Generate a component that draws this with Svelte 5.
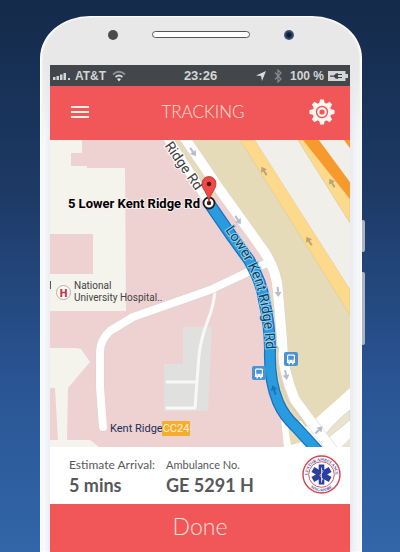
<script>
  const carrier = 'AT&T';
  const stops = [
    { x: 202, y: 226 },
    { x: 234, y: 212 },
  ];
  const laneArrows = [
    { x: 143, y: 12, turn: 56, tone: 'cool' },
    { x: 188, y: 80, turn: 56, tone: 'cool' },
    { x: 228, y: 152, turn: 85, tone: 'cool' },
    { x: 236, y: 235, turn: 80, tone: 'cool' },
    { x: 269, y: 290, turn: -45, tone: 'cool' },
    { x: 224, y: 250, turn: -110, tone: 'route' },
    { x: 214, y: 31, turn: -122, tone: 'warm' },
    { x: 282, y: 43, turn: -122, tone: 'warm' },
    { x: 259, y: 101, turn: -122, tone: 'warm' },
  ];
</script>

<main class="page">
  <div class="phone">
    <span class="key power"></span>
    <span class="key volume"></span>
    <div class="earpiece">
      <span class="sensor"></span>
      <span class="speaker"></span>
      <span class="sensor camera"></span>
    </div>

    <div class="screen">
      <div class="status">
        <div class="side">
          <svg width="18" height="8" viewBox="0 0 18 8" fill="#d3d5d7" aria-hidden="true">
            <path d="M0 5h2.500v3H0zM3.500 4H6v4H3.500zM7 2.500h2.500V8H7zM10.500 1H13v7h-2.500zM15 6h2v2h-2z" />
          </svg>
          <span class="carrier">{carrier}</span>
          <svg width="14" height="12" viewBox="0 0 14 12" fill="none" aria-hidden="true">
            <path d="M1 4.500Q7-1 13 4.500" stroke="#8f9396" stroke-width="1.700" />
            <path d="M3.500 7Q7 4 10.500 7" stroke="#d3d5d7" stroke-width="1.700" />
            <path d="M5 9Q7 7.300 9 9L7 11.500z" fill="#e5e6e7" />
          </svg>
        </div>
        <span>23:26</span>
        <div class="side end">
          <svg width="10" height="10" viewBox="0 0 10 10" fill="#d8dadb" aria-hidden="true">
            <path d="M10 0L6 10L5 5L0 4.500z" />
          </svg>
          <svg class="bt" width="8" height="14" viewBox="0 0 8 14" fill="none" stroke="#85898d" stroke-width="1.300" aria-hidden="true">
            <path d="M1 3.500L7 10L4 13V1L7 4L1 10.500" />
          </svg>
          <span>100 %</span>
          <svg width="20" height="10" viewBox="0 0 20 10" aria-hidden="true">
            <path d="M0 0h17.500v3H20v4h-2.500v3H0z" fill="#d3d5d7" />
            <path d="M2 4.500h4Q7 2 10 2v1h4v1h-4v2h4v1h-4v1Q7 8 6 5.800H2z" fill="#3d4246" />
          </svg>
        </div>
      </div>

      <header>
        <button class="icon" aria-label="Menu">
          <svg width="18" height="12" viewBox="0 0 18 12" fill="#fdeeea" aria-hidden="true">
            <path d="M0 0h18v2H0zM0 5h18v2H0zM0 10h18v2H0z" />
          </svg>
        </button>
        <h1>TRACKING</h1>
        <button class="icon right" aria-label="Settings">
          <svg width="26" height="26" viewBox="-13 -13 26 26" fill="none" stroke="#fff6f0" aria-hidden="true">
            {#each [0, 45, 90, 135, 180, 225, 270, 315] as turn}
              <path d="M-3-8L-1.900-12.500H1.900L3-8z" fill="#fff6f0" stroke="none" transform="rotate({turn})" />
            {/each}
            <circle r="7.800" stroke-width="3.200" />
            <circle r="3.700" stroke-width="2.200" />
          </svg>
        </button>
      </header>

      <svg class="map" viewBox="0 0 300 307" role="img" aria-label="Route map to 5 Lower Kent Ridge Rd">
        <defs>
          <path id="route-label" d="M175 90L187 107Q206 137 209 158Q215 180 216 215" />
          <path id="road-label" d="M113 4L155 64" />
        </defs>
        <rect width="300" height="307" fill="#e6dbb9" />
        <path d="M0 0H122L160 57L171 55L216 118L222 150L221 233L229 265L234 307H0z" fill="#eed2d2" />
        <path fill="#f4f3ec" d="M0 0H32V13H21V26H37V28H75L76 171H0V134H43V94H0z" />
        <path fill="#f4f3ec" d="M0 208H26L31 209L40 222L18 248L17 300H40L49 307H0V300H8L5 248H0z" />
        <path d="M133 187H162L158 271H114V224H133z" fill="#e0e0df" />

        <path d="M190 0H205L300 149V175z" fill="#fcd98b" stroke="#d8c9a0" stroke-width=".6" />
        <path d="M205 0H248L300 83V149z" fill="#f1efea" />
        <path d="M248 0H254L300 60V83z" fill="#fcd98b" stroke="#d8c9a0" stroke-width=".6" />
        <path d="M253 0H269L300 42V59z" fill="#f8992c" />
        <path d="M269 0H294L300 8V42z" fill="#f1efea" />
        <path d="M294 0H300V8z" fill="#f8992c" />

        <path d="M229 260L238 280L262 282L300 248V307H234z" fill="#fff" />
        <path d="M238 287L252 302L241 305z" fill="#e6dbb9" />
        <path d="M275 295Q284 283 300 270V280L279 297z" fill="#e9e3cf" stroke="#cfc7b0" stroke-width=".6" />
        <path d="M291 307L300 298V307z" fill="#e9e3cf" />

        <g fill="none" stroke-linecap="round" stroke-linejoin="round">
          <path d="M165 150Q164 165 158 180Q151 198 149 215L145 268H117M117 242H147" stroke="#f8f8f8" stroke-width="3" />
          <g stroke="#ddcfca">
            <path d="M217 123L160 150L83 177L60 191Q50 200 50 212V247L53 287" stroke-width="9" />
            <path d="M132-6L170 50L193 82L213 110Q227 130 228 152L232 200Q232 230 245 260L265 287L285 313" stroke-width="11" />
            <path d="M115-6L162 67L200 120" stroke-width="10" />
          </g>
          <g stroke="#fff">
            <path d="M217 123L160 150L83 177L60 191Q50 200 50 212V247L53 287" stroke-width="8" />
            <path d="M132-6L170 50L193 82L213 110Q227 130 228 152L232 200Q232 230 245 260L265 287L285 313" stroke-width="10" />
            <path d="M115-6L162 67" stroke-width="9" />
          </g>
          <path d="M228 208Q225 233 237 260L256 286" stroke="#dfd0b0" stroke-width="2" />
          <path d="M161 66L183 98L199 120Q212 143 214 160Q220 185 220 210Q219 240 228 262Q234 276 246 287L268 311" stroke="#1c6fc0" stroke-width="12" />
          <path d="M161 66L183 98L199 120Q212 143 214 160Q220 185 220 210Q219 240 228 262Q234 276 246 287L268 311" stroke="#299ce0" stroke-width="9.500" />
        </g>

        {#each laneArrows as a}
          <path class={a.tone} d="M-5-1H0V-3.500L5 0L0 3.500V1H-5z" transform="translate({a.x} {a.y}) rotate({a.turn})" />
        {/each}

        {#each stops as s}
          <g transform="translate({s.x} {s.y})" fill="#fff">
            <rect width="14" height="14" rx="2" fill="#4b93d6" />
            <path d="M4 2.500h6l1 1V11H9.500v1.500H8V11H6v1.500H4.500V11H3V3.500z" />
            <path d="M4.500 4h5v3.500h-5zM4.500 9H6M8 9h1.500" fill="#4b93d6" stroke="#4b93d6" stroke-width=".6" />
          </g>
        {/each}

        <text class="street"><textPath href="#road-label" startOffset="2">Ridge Rd</textPath></text>
        <text class="street on-route"><textPath href="#route-label">Lower Kent Ridge Rd</textPath></text>

        <circle cx="159" cy="63" r="5.500" fill="#fff" stroke="#1c1c1c" stroke-width="1.800" />
        <circle cx="159" cy="63" r="2.200" fill="#222" />
        <path d="M159 62C158 53 152 50 152 43.500A7 7 0 0 1 166 43.500C166 50 160 53 159 62z" fill="#ec4b48" stroke="#b22f2d" stroke-width=".8" />
        <circle cx="159" cy="44" r="2.300" fill="#5c1211" />
        <text class="place" x="150" y="68" text-anchor="end">5 Lower Kent Ridge Rd</text>

        <path d="M0 141H1V149H0z" fill="#555" />
        <circle cx="13.500" cy="152.500" r="7" fill="#fff" stroke="#c5a9a7" />
        <text class="hospital" x="13.500" y="156.500" text-anchor="middle">H</text>
        <text class="poi" x="24" y="149">National</text>
        <text class="poi" x="24" y="161">University Hospital..</text>

        <text class="station" x="60" y="292">Kent Ridge</text>
        <rect x="112" y="281" width="28" height="15" rx="1" fill="#f6ac2f" />
        <text class="code" x="126" y="292" text-anchor="middle">CC24</text>
      </svg>

      <section class="info">
        <div class="fact">
          <span class="label">Estimate Arrival:</span>
          <strong>5 mins</strong>
        </div>
        <div class="fact">
          <span class="label small">Ambulance No.</span>
          <strong>GE 5291 H</strong>
        </div>
        <svg class="badge" width="39" height="39" viewBox="-19.500 -19.500 39 39" role="img" aria-label="Lentor Ambulance Singapore">
          <defs>
            <path id="ring-top" d="M-13.500 4A14 14 0 1 1 13.500 4" />
            <path id="ring-bottom" d="M-16 5A16.700 16.700 0 0 0 16 5" />
          </defs>
          <circle r="18.500" fill="#fff" stroke="#d8434c" stroke-width="1.400" />
          <circle r="12.800" fill="#fff" stroke="#dc5a62" stroke-width="1" />
          <text><textPath href="#ring-top" startOffset="50%" text-anchor="middle">LENTOR AMBULANCE</textPath></text>
          <text><textPath href="#ring-bottom" startOffset="50%" text-anchor="middle">SINGAPORE</textPath></text>
          <g fill="#2b3f9e">
            <rect x="-2.800" y="-10" width="5.600" height="20" />
            <rect x="-2.800" y="-10" width="5.600" height="20" transform="rotate(60)" />
            <rect x="-2.800" y="-10" width="5.600" height="20" transform="rotate(120)" />
          </g>
          <path d="M0-7V8M0-5Q3-3 0-1T0 3T0 6" fill="none" stroke="#e9d9d0" stroke-width=".9" />
        </svg>
      </section>

      <button class="done">Done</button>
    </div>
  </div>
</main>

<style>
  :global(body) {
    margin: 0;
  }
  .page {
    box-sizing: border-box;
    min-height: 100vh;
    display: flex;
    padding: 16px 38px 0 40px;
    background: linear-gradient(#142a4a, #1d3a66 35%, #2a5594 70%, #3266a8);
    font-family: Lato, 'Open Sans', sans-serif;
  }
  .phone {
    position: relative;
    flex: 1;
    display: flex;
    flex-direction: column;
    padding: 0 12px 0 10px;
    border-radius: 50px 50px 0 0 / 42px 42px 0 0;
    background: linear-gradient(#e8e8e8 50px, transparent 130px),
      linear-gradient(90deg, #c9ccd2, #fafbfd 3px, #eceff4 9px, #e8ebf0 calc(100% - 12px), #f8f9fb calc(100% - 3px), #cdd0d6);
    box-shadow: inset 0 1px 2px #fff, inset 2px 0 2px #fff, inset -2px 0 2px #fff;
  }
  .key {
    position: absolute;
    left: 100%;
    width: 3px;
    background: #aab4c4;
    border-radius: 0 2px 2px 0;
  }
  .power {
    top: 204px;
    height: 32px;
  }
  .volume {
    top: 256px;
    height: 73px;
  }
  .earpiece {
    display: flex;
    justify-content: center;
    align-items: center;
    gap: 34px;
    height: 37px;
    padding: 0 0 12px 2px;
  }
  .sensor {
    width: 10px;
    height: 10px;
    border-radius: 50%;
    background: #4b4b4b;
  }
  .camera {
    background: radial-gradient(#0d1c3c 25%, #33466b 50%, #5d636c 75%);
  }
  .speaker {
    box-sizing: border-box;
    width: 98px;
    height: 7px;
    border: 1px solid #555;
    border-radius: 4px;
    background: #fff;
  }
  .screen {
    flex: 1;
    display: flex;
    flex-direction: column;
    background: #fff;
  }
  .status {
    display: grid;
    grid-template-columns: 1fr auto 1fr;
    align-items: center;
    height: 21px;
    padding: 0 2px 0 3px;
    background: #43474c;
    color: #d3d5d7;
    font: bold 13px 'Liberation Sans', Arial, sans-serif;
    white-space: nowrap;
  }
  .side {
    display: flex;
    align-items: center;
    gap: 4px;
  }
  .carrier {
    margin-right: 2px;
    font-size: 12px;
  }
  .end {
    justify-content: flex-end;
  }
  .bt {
    margin: 0 4px;
  }
  .end span {
    font-size: 12px;
  }
  header {
    display: grid;
    grid-template-columns: 1fr auto 1fr;
    align-items: center;
    height: 52px;
    padding: 0 15px 2px 21px;
    background: #f15659;
  }
  h1 {
    margin: 0;
    color: #fde3d8;
    font-size: 17px;
    font-weight: 300;
    line-height: 24px;
  }
  button {
    border: 0;
    padding: 0;
    background: none;
    font-family: inherit;
    cursor: pointer;
  }
  .icon {
    display: flex;
    justify-self: start;
  }
  .right {
    justify-self: end;
  }
  .map {
    display: block;
    width: 100%;
    height: auto;
    font-family: Roboto, sans-serif;
  }
  .cool {
    fill: #b4bdcd;
  }
  .warm {
    fill: #b9a577;
  }
  .route {
    fill: #1b73b8;
  }
  .street {
    font-size: 14px;
    fill: #3f4041;
    stroke: #fff;
    stroke-width: 2px;
    paint-order: stroke;
  }
  .on-route {
    fill: #123f5c;
    stroke: #8fd0f2;
  }
  .place {
    font-size: 13px;
    font-weight: 700;
    fill: #000;
    stroke: #f8eeee;
    stroke-width: 2px;
    paint-order: stroke;
  }
  .hospital {
    font-size: 11px;
    font-weight: 900;
    fill: #c9373a;
  }
  .poi {
    font-size: 10px;
    fill: #454343;
  }
  .station {
    font-size: 11px;
    fill: #1c2f57;
  }
  .code {
    font-size: 11px;
    fill: #fff3d4;
  }
  .info {
    display: flex;
    align-items: center;
    gap: 11px;
    height: 57px;
    padding: 0 9px 0 19px;
    color: #58585a;
    white-space: nowrap;
  }
  .fact {
    display: flex;
    flex-direction: column;
  }
  .label {
    font-size: 12px;
    line-height: 18px;
  }
  .small {
    font-size: 11px;
  }
  strong {
    font-size: 18px;
    font-weight: 700;
    line-height: 22px;
  }
  .badge {
    margin-left: auto;
    margin-bottom: 2px;
  }
  .badge text {
    font: bold 4px 'Liberation Serif', serif;
    fill: #34479c;
  }
  .done {
    flex: 1;
    min-height: 48px;
    padding-bottom: 4px;
    background: #f15659;
    color: #fde3d8;
    font-size: 23px;
    font-weight: 300;
    line-height: 28px;
  }
</style>
